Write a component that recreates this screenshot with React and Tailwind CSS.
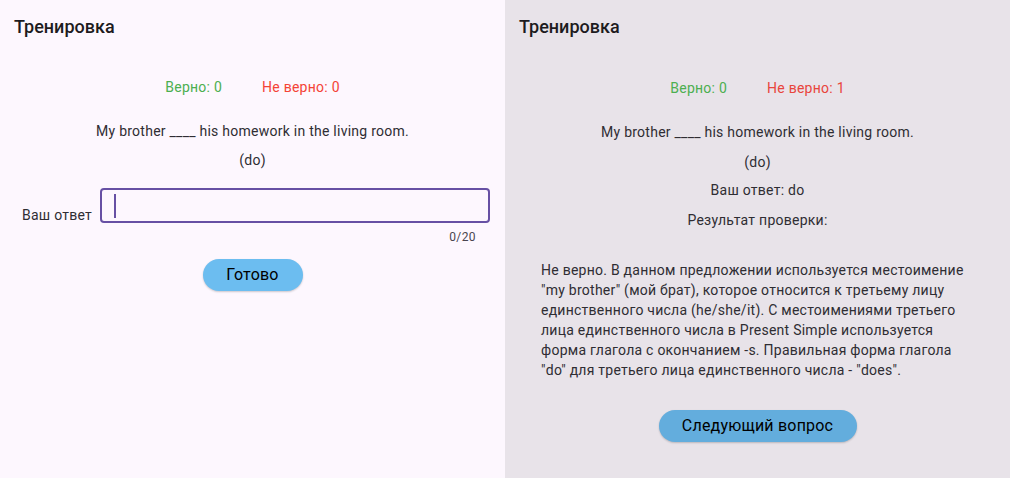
export default function App() {
  return (
    <div
      className="flex w-[1010px] h-[478px] overflow-hidden text-[#1d1b20] tracking-[0.25px]"
      style={{ fontFamily: "Roboto, 'Noto Sans', sans-serif" }}
    >
      {/* Left: question */}
      <div className="w-[505px] h-full bg-[#fdf7fe] flex flex-col">
        <div className="pt-[15px] pl-[14px] text-[18px] leading-[24px] font-medium tracking-normal">Тренировка</div>

        <div className="mt-[38px] flex justify-center gap-[40px] text-[14px] leading-[20px]">
          <span className="text-[#4caf50]">Верно: 0</span>
          <span className="text-[#f44336]">Не верно: 0</span>
        </div>

        <div className="mt-[24px] text-center text-[14px] leading-[20px] text-[#2f2d33]">
          My brother ____ his homework in the living room.
        </div>
        <div className="mt-[9px] text-center text-[14px] leading-[20px] text-[#2f2d33]">(do)</div>

        <div className="mt-[18px] flex items-start pl-[22px] pr-[15px]">
          <span className="mt-[17px] mr-[8px] text-[14px] leading-[20px] text-[#2f2d33]">Ваш ответ</span>
          <div className="flex-1 flex flex-col">
            <div className="h-[35px] rounded-[4px] border-2 border-[#6750a4] flex items-center pl-[12px]">
              <div className="w-[2px] h-[24px] bg-[#6750a4]" />
            </div>
            <div className="self-end mr-[14px] mt-[6px] text-[12px] leading-[16px] text-[#49454f] tracking-[0.4px]">0/20</div>
          </div>
        </div>

        <div className="mt-[14px] flex justify-center">
          <button className="w-[100px] h-[32px] rounded-full bg-[#6cbdf0] text-[16px] text-black tracking-[0.2px] shadow-[0_1px_2px_rgba(0,0,0,0.2)]">
            Готово
          </button>
        </div>
      </div>

      {/* Right: result */}
      <div className="w-[505px] h-full bg-[#e8e3e9] flex flex-col">
        <div className="pt-[15px] pl-[14px] text-[18px] leading-[24px] font-medium tracking-normal">Тренировка</div>

        <div className="mt-[39px] flex justify-center gap-[40px] text-[14px] leading-[20px]">
          <span className="text-[#4caf50]">Верно: 0</span>
          <span className="text-[#e8453c]">Не верно: 1</span>
        </div>

        <div className="mt-[24px] text-center text-[14px] leading-[20px] text-[#2f2d33]">
          My brother ____ his homework in the living room.
        </div>
        <div className="mt-[10px] text-center text-[14px] leading-[20px] text-[#2f2d33]">(do)</div>
        <div className="mt-[8px] text-center text-[14px] leading-[20px] text-[#2f2d33]">Ваш ответ: do</div>
        <div className="mt-[10px] text-center text-[14px] leading-[20px] text-[#2f2d33]">Результат проверки:</div>

        <div className="mt-[30px] pl-[36px] text-[14px] leading-[20px] text-[#2f2d33]">
          Не верно. В данном предложении используется местоимение<br />
          "my brother" (мой брат), которое относится к третьему лицу<br />
          единственного числа (he/she/it). С местоимениями третьего<br />
          лица единственного числа в Present Simple используется<br />
          форма глагола с окончанием -s. Правильная форма глагола<br />
          "do" для третьего лица единственного числа - "does".
        </div>

        <div className="mt-[30px] flex justify-center">
          <button className="w-[198px] h-[32px] rounded-full bg-[#63addd] text-[16px] text-black tracking-[0.2px] shadow-[0_1px_2px_rgba(0,0,0,0.2)]">
            Следующий вопрос
          </button>
        </div>
      </div>
    </div>
  );
}
